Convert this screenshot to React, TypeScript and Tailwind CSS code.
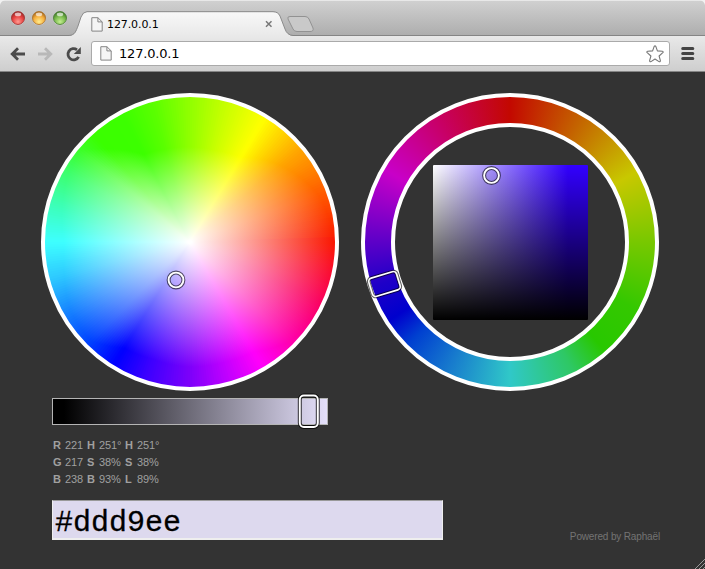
import React from "react";

type Stop = [number, number[]];

// Angle (counter-clockwise from the right) -> red, green, blue and the radius at which the white fades out
const WHEEL: Stop[] = [
  [0, [250, 22, 0, 145]],
  [20, [255, 90, 0, 137]],
  [40, [255, 165, 0, 119]],
  [59, [255, 255, 0, 99]],
  [75, [200, 255, 0, 95]],
  [90, [145, 255, 0, 95]],
  [105, [90, 255, 0, 96]],
  [118, [60, 255, 0, 99]],
  [132, [58, 255, 0, 125]],
  [140, [60, 255, 40, 143]],
  [150, [60, 255, 105, 140]],
  [165, [60, 255, 185, 132]],
  [180, [62, 255, 255, 126]],
  [195, [45, 200, 255, 130]],
  [210, [22, 130, 255, 138]],
  [225, [0, 65, 255, 140]],
  [238, [0, 0, 255, 125]],
  [252, [60, 0, 255, 123]],
  [270, [125, 0, 250, 125]],
  [285, [190, 0, 255, 125]],
  [300, [255, 0, 250, 127]],
  [315, [255, 0, 175, 141]],
  [335, [250, 0, 95, 145]],
  [360, [250, 22, 0, 145]],
];

function sample(angle: number): number[] {
  const i = Math.max(1, WHEEL.findIndex(([a]) => a >= angle));
  const [a0, v0] = WHEEL[i - 1];
  const [a1, v1] = WHEEL[i];
  const t = (angle - a0) / (a1 - a0);
  return v0.map((v, k) => v + (v1[k] - v) * t);
}

function HueWheel() {
  const wedges = Array.from({ length: 360 }, (_, a) => {
    const [r, g, b, radius] = sample(a + 0.5);
    const p = (deg: number) => {
      const t = (deg * Math.PI) / 180;
      return `${149 + 146 * Math.cos(t)} ${149 - 146 * Math.sin(t)}`;
    };
    // Each wedge reaches under the next one so that no seam shows between them
    return { a, radius, color: `rgb(${Math.round(r)},${Math.round(g)},${Math.round(b)})`, d: `M149 149L${p(a)}L${p(a + 3)}Z` };
  });
  return (
    <svg width="298" height="298" viewBox="0 0 298 298">
      <defs>
        {wedges.map((w) => (
          <radialGradient key={w.a} id={`w${w.a}`} gradientUnits="userSpaceOnUse" cx="149" cy="149" r={w.radius}>
            <stop offset="0" stopColor="#fff" />
            <stop offset="1" stopColor={w.color} />
          </radialGradient>
        ))}
      </defs>
      <circle cx="149" cy="149" r="146" fill="#fff" />
      {wedges.map((w) => (
        <path key={w.a} d={w.d} fill={`url(#w${w.a})`} />
      ))}
      <circle cx="149" cy="149" r="147" fill="none" stroke="#fff" strokeWidth="4" />
      <Marker x={135} y={187} />
    </svg>
  );
}

function Marker({ x, y }: { x: number; y: number }) {
  return (
    <g fill="none">
      <circle cx={x} cy={y} r="7.4" stroke="#000" strokeOpacity=".6" strokeWidth="4" />
      <circle cx={x} cy={y} r="7.4" stroke="#fff" strokeWidth="1.9" />
    </g>
  );
}

function HueRing() {
  return (
    <div className="relative flex size-[298px] items-center justify-center rounded-full border-4 border-white bg-[conic-gradient(#c30800_0deg,#c46400_30deg,#c8c800_61deg,#78c800_90deg,#34c800_118deg,#28c800_139deg,#2ec864_154deg,#30c8c8_180deg,#187dcd_205deg,#0040d0_225deg,#0000cd_237deg,#1e00c8_252deg,#6e00c8_275deg,#c800c8_300deg,#c80064_330deg,#c30800_360deg)] bg-origin-border">
      <div className="flex size-[238px] items-center justify-center rounded-full border-4 border-white bg-[#333]">
        <div className="size-[155px] rounded-[1px] bg-[linear-gradient(to_top,#000,transparent),linear-gradient(to_right,#fff,#3200ff_87%,#3200ff)]" />
      </div>
      <svg className="absolute -left-1 -top-1" width="298" height="298" viewBox="0 0 298 298" fill="none">
        <Marker x={130.5} y={82.5} />
        <g transform="translate(23.5 191) rotate(-17)">
          <rect x="-14.5" y="-9.5" width="29" height="19" rx="3.5" stroke="#000" strokeOpacity=".6" strokeWidth="3.8" />
          <rect x="-14.5" y="-9.5" width="29" height="19" rx="3.5" stroke="#fff" strokeWidth="1.6" />
        </g>
      </svg>
    </div>
  );
}

function PageIcon() {
  return (
    <svg width="12" height="15" viewBox="0 0 12 15" fill="#f5f5f5" stroke="#858585">
      <path d="M.8.7h6.1l4.3 4.2v9.2H.8z" />
      <path d="M6.9.7v4.2h4.3" fill="none" />
    </svg>
  );
}

function Light({ id, x, light, mid, dark }: { id: string; x: number; light: string; mid: string; dark: string }) {
  return (
    <g>
      <defs>
        <radialGradient id={id} cx=".5" cy=".78" r=".72">
          <stop offset="0" stopColor={light} />
          <stop offset=".6" stopColor={mid} />
          <stop offset="1" stopColor={dark} />
        </radialGradient>
      </defs>
      <circle cx={x} cy="18.8" r="6.5" fill="#fff" opacity=".4" />
      <circle cx={x} cy="18" r="6.5" fill={`url(#${id})`} stroke={dark} strokeWidth=".8" />
      <ellipse cx={x} cy="14.4" rx="3.2" ry="1.8" fill="#fff" opacity=".65" />
    </g>
  );
}

function TabStrip() {
  return (
    <div className="relative h-9 bg-gradient-to-b from-[#d1d1d1] to-[#adadad]">
      <svg className="absolute left-0 top-0" width="705" height="36" viewBox="0 0 705 36">
        <defs>
          <linearGradient id="tab" x1="0" x2="0" y1="0" y2="1">
            <stop stopColor="#f8f8f8" />
            <stop offset="1" stopColor="#e9e9e9" />
          </linearGradient>
        </defs>
        <path d="M0 .5H705" stroke="#e8e8e8" />
        <path d="M0 0H5Q1 1 0 5ZM705 0H700Q704 1 705 5Z" fill="#f2f2f2" />
        <path d="M0 35.5H705" stroke="#858585" />
        <path d="M69 36C76 35 76 31 78 26L81 17Q83 12 87 12H273Q278 12 280 16L285 29Q287 35 293 36Z" fill="url(#tab)" />
        <path d="M69 35.5C75 35 76 31 78 26L81 17Q83 11.7 87 11.7H273Q278 11.7 280 16L285 29Q287 35 293 35.5" fill="none" stroke="#8b8b8b" />
        <path d="M290 16.5H305Q308 16.5 309 19L313 28Q314 31.5 310 31.5H297Q294 31.5 293 29L288 19Q287 16.5 290 16.5Z" fill="#c9c9c9" stroke="#929292" />
        <Light id="red" x={18} light="#ff9a91" mid="#e7413f" dark="#9d2b2a" />
        <Light id="amber" x={39} light="#ffec8e" mid="#f5ae3d" dark="#a96b20" />
        <Light id="green" x={60} light="#c4ee91" mid="#78b94b" dark="#427a2b" />
        <path d="M266 21.2l5.5 5.5m0-5.5l-5.5 5.5" stroke="#777" strokeWidth="1.5" />
      </svg>
      <div className="relative flex h-9 items-center gap-1 pl-[91px] pt-3 font-['DejaVu_Sans',sans-serif] text-[11px] leading-none tracking-[-0.1px] text-black">
        <PageIcon />
        <span>127.0.0.1</span>
      </div>
    </div>
  );
}

function Toolbar() {
  return (
    <div className="flex h-9 items-center border-b border-[#858585] bg-gradient-to-b from-[#e9e9e9] to-[#cecece]">
      <svg width="91" height="34" viewBox="0 36 91 34" fill="none" strokeWidth="2.8">
        <path d="M25 53H12.5M18 47.2L12.2 53L18 58.8" stroke="#4b4b4b" />
        <path d="M38 53H50.5M45 47.2L50.8 53L45 58.8" stroke="#b8b8b8" />
        <path d="M77 48.8A5.6 5.6 0 1 0 78.6 55.8" stroke="#4b4b4b" />
        <path d="M80.8 46V53H73.8Z" fill="#4b4b4b" />
      </svg>
      <div className="flex h-[25px] w-[579px] items-center rounded-[3px] border border-[#aaa] bg-white pl-2 pr-[5px] font-['DejaVu_Sans',sans-serif] text-[13px] leading-none tracking-[-0.2px] text-black">
        <PageIcon />
        <span className="pl-[7px]">127.0.0.1</span>
        <svg className="ml-auto" width="18" height="18" viewBox="0 0 18 18" fill="#fff" stroke="#777" strokeWidth="1.1" strokeLinejoin="round">
          <path d="M8.2 1.4Q9 .3 9.8 1.4L11.4 5.9L16.4 6.2Q17.8 6.6 16.8 7.7L13.1 11L14.4 15.6Q14.4 17.2 13 16.6L9 14L5 16.6Q3.6 17.2 3.6 15.6L4.9 11L1.2 7.7Q.2 6.6 1.6 6.2L6.6 5.9Z" />
        </svg>
      </div>
      <svg className="ml-[11px]" width="14" height="15" viewBox="0 0 14 15" stroke="#444" strokeWidth="3" strokeLinecap="round">
        <path d="M1.7 2.5H11.8M1.7 7.5H11.8M1.7 12.5H11.8" />
      </svg>
    </div>
  );
}

const VALUES = [
  ["R", "221", "H", "251°", "H", "251°"],
  ["G", "217", "S", "38%", "S", "38%"],
  ["B", "238", "B", "93%", "L", "89%"],
];

export default function App() {
  return (
    <div className="flex h-[569px] w-[705px] flex-col overflow-hidden bg-[#333] font-['Liberation_Sans',Arial,sans-serif]">
      <TabStrip />
      <Toolbar />
      <main className="relative flex-1 pt-[21px]">
        <div className="flex gap-[22px] pl-[41px]">
          <HueWheel />
          <HueRing />
        </div>
        <div className="relative ml-[52px] mt-[7px] h-[27px] w-[276px] border border-[#b5b5b5] bg-[linear-gradient(to_right,#000_4%,#e5e0fb)]">
          <svg className="absolute -top-[6px] left-[244px]" width="24" height="36" viewBox="0 0 24 36" fill="none">
            <rect x="2.8" y="2.5" width="18" height="31.5" rx="4" stroke="#000" strokeOpacity=".75" strokeWidth="4" />
            <rect x="2.8" y="2.5" width="18" height="31.5" rx="4" stroke="#fff" strokeWidth="1.9" />
          </svg>
        </div>
        <div className="ml-[53px] mt-3 grid w-[120px] grid-cols-[12px_22px_12px_26px_12px_30px] text-[11px] leading-[17px] text-[#a0a0a0]">
          {VALUES.flat().map((v, i) => (
            <span key={i} className={i % 2 ? "tracking-[-0.1px]" : "font-bold"}>{v}</span>
          ))}
        </div>
        <div className="ml-[52px] mt-3 flex h-[40px] w-[391px] items-center border border-b-2 border-[#eee] border-t-[#999] bg-[#ddd9ee] pl-0.5 pt-[6px] font-['Liberation_Mono',monospace] text-[30px] leading-none text-black [-webkit-text-stroke:0.3px_black]">
          #ddd9ee
        </div>
        <div className="absolute bottom-[24px] right-[45px] text-[10px] leading-4 tracking-[-0.15px] text-[#737373]">Powered by Raphaël</div>
        <svg className="absolute bottom-0 right-0" width="11" height="11" viewBox="0 0 11 11" stroke="#999">
          <path d="M1 11L11 1M5 11L11 5M9 11L11 9" />
        </svg>
      </main>
    </div>
  );
}
